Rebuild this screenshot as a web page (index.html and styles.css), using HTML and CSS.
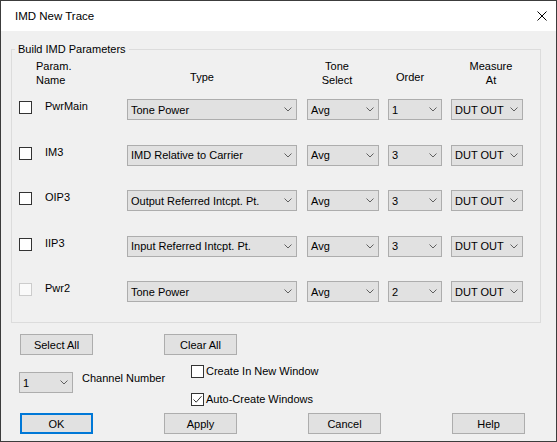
FILE: index.html
```html
<!DOCTYPE html>
<html>
<head>
<meta charset="utf-8">
<title>IMD New Trace</title>
<link rel="stylesheet" href="styles.css">
</head>
<body>
<div class="window">
  <div class="titlebar">
    <span class="title">IMD New Trace</span>
    <svg class="close" width="10" height="10" viewBox="0 0 10 10"><path d="M0.5 0.5 L9.5 9.5 M9.5 0.5 L0.5 9.5" stroke="#000" stroke-width="1" fill="none"/></svg>
  </div>
  <div class="content">
    <div class="group">
      <span class="legend">Build IMD Parameters</span>
      <div class="head">
        <div class="h-param">Param.<br>Name</div>
        <div class="h-type">Type</div>
        <div class="h-tone">Tone<br>Select</div>
        <div class="h-order">Order</div>
        <div class="h-meas">Measure<br>At</div>
      </div>
      <div class="params">
        <div class="cb"></div><div class="pname">PwrMain</div>
        <div class="combo w-type"><span>Tone Power</span><svg width="8" height="5" viewBox="0 0 8 5"><path d="M0.5 0.5 L4 4 L7.5 0.5" stroke="#606060" fill="none"/></svg></div>
        <div class="combo w-tone"><span>Avg</span><svg width="8" height="5" viewBox="0 0 8 5"><path d="M0.5 0.5 L4 4 L7.5 0.5" stroke="#606060" fill="none"/></svg></div>
        <div class="combo w-order"><span>1</span><svg width="8" height="5" viewBox="0 0 8 5"><path d="M0.5 0.5 L4 4 L7.5 0.5" stroke="#606060" fill="none"/></svg></div>
        <div class="combo w-meas"><span>DUT OUT</span><svg width="8" height="5" viewBox="0 0 8 5"><path d="M0.5 0.5 L4 4 L7.5 0.5" stroke="#606060" fill="none"/></svg></div>

        <div class="cb"></div><div class="pname">IM3</div>
        <div class="combo w-type"><span>IMD Relative to Carrier</span><svg width="8" height="5" viewBox="0 0 8 5"><path d="M0.5 0.5 L4 4 L7.5 0.5" stroke="#606060" fill="none"/></svg></div>
        <div class="combo w-tone"><span>Avg</span><svg width="8" height="5" viewBox="0 0 8 5"><path d="M0.5 0.5 L4 4 L7.5 0.5" stroke="#606060" fill="none"/></svg></div>
        <div class="combo w-order"><span>3</span><svg width="8" height="5" viewBox="0 0 8 5"><path d="M0.5 0.5 L4 4 L7.5 0.5" stroke="#606060" fill="none"/></svg></div>
        <div class="combo w-meas"><span>DUT OUT</span><svg width="8" height="5" viewBox="0 0 8 5"><path d="M0.5 0.5 L4 4 L7.5 0.5" stroke="#606060" fill="none"/></svg></div>

        <div class="cb"></div><div class="pname">OIP3</div>
        <div class="combo w-type"><span>Output Referred Intcpt. Pt.</span><svg width="8" height="5" viewBox="0 0 8 5"><path d="M0.5 0.5 L4 4 L7.5 0.5" stroke="#606060" fill="none"/></svg></div>
        <div class="combo w-tone"><span>Avg</span><svg width="8" height="5" viewBox="0 0 8 5"><path d="M0.5 0.5 L4 4 L7.5 0.5" stroke="#606060" fill="none"/></svg></div>
        <div class="combo w-order"><span>3</span><svg width="8" height="5" viewBox="0 0 8 5"><path d="M0.5 0.5 L4 4 L7.5 0.5" stroke="#606060" fill="none"/></svg></div>
        <div class="combo w-meas"><span>DUT OUT</span><svg width="8" height="5" viewBox="0 0 8 5"><path d="M0.5 0.5 L4 4 L7.5 0.5" stroke="#606060" fill="none"/></svg></div>

        <div class="cb"></div><div class="pname">IIP3</div>
        <div class="combo w-type"><span>Input Referred Intcpt. Pt.</span><svg width="8" height="5" viewBox="0 0 8 5"><path d="M0.5 0.5 L4 4 L7.5 0.5" stroke="#606060" fill="none"/></svg></div>
        <div class="combo w-tone"><span>Avg</span><svg width="8" height="5" viewBox="0 0 8 5"><path d="M0.5 0.5 L4 4 L7.5 0.5" stroke="#606060" fill="none"/></svg></div>
        <div class="combo w-order"><span>3</span><svg width="8" height="5" viewBox="0 0 8 5"><path d="M0.5 0.5 L4 4 L7.5 0.5" stroke="#606060" fill="none"/></svg></div>
        <div class="combo w-meas"><span>DUT OUT</span><svg width="8" height="5" viewBox="0 0 8 5"><path d="M0.5 0.5 L4 4 L7.5 0.5" stroke="#606060" fill="none"/></svg></div>

        <div class="cb disabled"></div><div class="pname">Pwr2</div>
        <div class="combo w-type"><span>Tone Power</span><svg width="8" height="5" viewBox="0 0 8 5"><path d="M0.5 0.5 L4 4 L7.5 0.5" stroke="#606060" fill="none"/></svg></div>
        <div class="combo w-tone"><span>Avg</span><svg width="8" height="5" viewBox="0 0 8 5"><path d="M0.5 0.5 L4 4 L7.5 0.5" stroke="#606060" fill="none"/></svg></div>
        <div class="combo w-order"><span>2</span><svg width="8" height="5" viewBox="0 0 8 5"><path d="M0.5 0.5 L4 4 L7.5 0.5" stroke="#606060" fill="none"/></svg></div>
        <div class="combo w-meas"><span>DUT OUT</span><svg width="8" height="5" viewBox="0 0 8 5"><path d="M0.5 0.5 L4 4 L7.5 0.5" stroke="#606060" fill="none"/></svg></div>
      </div>
    </div>

    <div class="bottom">
      <div class="btnrow">
        <div class="btn">Select All</div>
        <div class="btn">Clear All</div>
      </div>
      <div class="middle">
        <div class="chan">
          <div class="combo w-chan"><span>1</span><svg width="8" height="5" viewBox="0 0 8 5"><path d="M0.5 0.5 L4 4 L7.5 0.5" stroke="#606060" fill="none"/></svg></div>
          <span class="chan-label">Channel Number</span>
        </div>
        <div class="checks">
          <div class="check"><div class="cb"></div><span>Create In New Window</span></div>
          <div class="check"><div class="cb"><svg width="11" height="11" viewBox="0 0 11 11"><path d="M1.5 5.5 L4.2 8.2 L9.5 2.2" stroke="#333" stroke-width="1" fill="none"/></svg></div><span>Auto-Create Windows</span></div>
        </div>
      </div>
      <div class="btnrow">
        <div class="btn default">OK</div>
        <div class="btn">Apply</div>
        <div class="btn">Cancel</div>
        <div class="btn">Help</div>
      </div>
    </div>
  </div>
</div>
</body>
</html>
```

FILE: styles.css
```css
html, body {
  margin: 0;
  padding: 0;
  background: #f0f0f0;
}

body {
  font-family: "Liberation Sans", Arial, sans-serif;
  font-size: 11px;
  line-height: 14px;
  color: #000;
}

.window {
  width: 557px;
  height: 442px;
  box-sizing: border-box;
  border: 1px solid #3c3c3c;
  background: #f0f0f0;
  overflow: hidden;
}

.titlebar {
  height: 30px;
  background: #fff;
  display: flex;
  align-items: center;
  justify-content: space-between;
  padding: 0 9px 0 14px;
}

.title {
  font-size: 11.5px;
}

.close {
  display: block;
}

.content {
  padding: 18px 0 0 10px;
}

.group {
  position: relative;
  width: 530px;
  box-sizing: border-box;
  border: 1px solid #dcdcdc;
  padding: 9px 0 20px 7px;
}

.legend {
  position: absolute;
  top: -8px;
  left: 3px;
  padding: 0 3px;
  background: #f0f0f0;
  line-height: 14px;
}

.head,
.params {
  display: grid;
  grid-template-columns: 26px 82px 180px 81px 63px 72px;
}

.head {
  height: 28px;
  align-items: end;
  margin-bottom: 12px;
}

.h-param {
  grid-column: 1 / span 2;
  padding-left: 17px;
}

.h-type {
  text-align: center;
  padding-right: 30px;
  padding-bottom: 3px;
}

.h-tone {
  text-align: center;
  padding-right: 21px;
}

.h-order {
  text-align: center;
  padding-right: 19px;
  padding-bottom: 3px;
}

.h-meas {
  text-align: center;
  padding-left: 8px;
}

.params {
  grid-auto-rows: 21px;
  row-gap: 24.5px;
  align-items: start;
}

.cb {
  width: 13px;
  height: 13px;
  box-sizing: border-box;
  border: 1px solid #333;
  background: #fff;
  display: flex;
  align-items: center;
  justify-content: center;
}

.params .cb {
  margin-top: 2px;
}

.cb.disabled {
  border-color: #cccccc;
  background: #fafafa;
}

.cb svg {
  display: block;
}

.pname {
  line-height: 14px;
}

.combo {
  height: 21px;
  box-sizing: border-box;
  border: 1px solid #adadad;
  background: #e1e1e1;
  display: flex;
  align-items: center;
  justify-content: space-between;
  padding: 0 4px 0 3px;
  white-space: nowrap;
}

.combo svg {
  display: block;
  flex: none;
}

.w-type { width: 170px; }
.w-tone { width: 72px; }
.w-order { width: 54px; }
.w-meas { width: 72px; }
.w-chan { width: 54px; }

.bottom {
  margin-top: 11px;
  padding-left: 9px;
}

.btnrow {
  display: flex;
  gap: 71px;
}

.btn {
  width: 73px;
  height: 21px;
  box-sizing: border-box;
  border: 1px solid #adadad;
  background: #e1e1e1;
  display: flex;
  align-items: center;
  justify-content: center;
}

.btn.default {
  border: 2px solid #0078d7;
}

.middle {
  height: 58px;
  display: flex;
}

.chan {
  width: 172px;
  margin-left: -1px;
  padding-top: 17px;
  display: flex;
  align-items: flex-start;
}

.chan-label {
  margin-left: 9px;
  margin-top: -1px;
}

.checks {
  padding-top: 9px;
  display: flex;
  flex-direction: column;
  gap: 14px;
}

.check {
  display: flex;
  align-items: flex-start;
}

.check .cb {
  margin-top: 1px;
  margin-right: 2px;
}
```
